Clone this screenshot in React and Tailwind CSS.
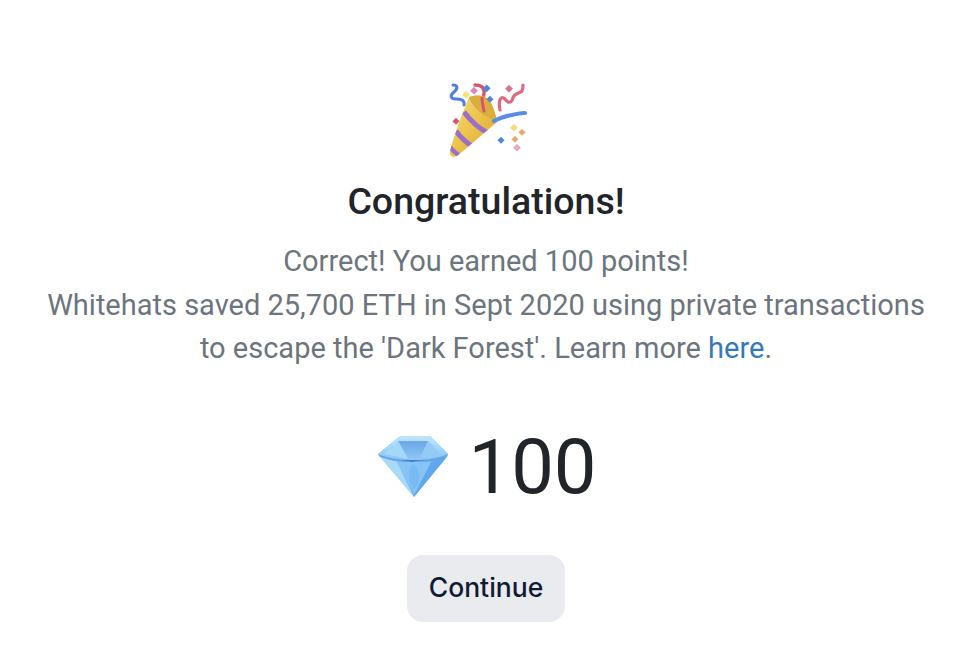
function Popper() {
  const cone = "M38 27 C46 24 56 25 60 33 C63 39 65 46 66 52 C52 64 38 76 26 86 C22 88 18 86 19 81 C24 62 31 44 38 27 Z";
  return (
    <svg width="110" height="100" viewBox="0 0 110 100" className="block blur-[0.4px]">
      <defs>
        <linearGradient id="gold" x1="0" y1="0" x2="1" y2="1">
          <stop offset="0" stopColor="#f6dc80" />
          <stop offset="0.5" stopColor="#ecc24a" />
          <stop offset="1" stopColor="#d6a534" />
        </linearGradient>
        <clipPath id="cone">
          <path d={cone} />
        </clipPath>
      </defs>
      <path d="M22 15 C27 15 27 19 23 22 C18 26 20 29 25 29 C30 29 34 30 33 35" fill="none" stroke="#4f7fe0" strokeWidth="3" strokeLinecap="round" />
      <path d="M44 15 C49 15 54 17 53 23 C52 28 52 34 53 41" fill="none" stroke="#d9546a" strokeWidth="3.4" strokeLinecap="round" />
      <path d="M69 40 C67 30 70 25 74 29 C77 33 80 34 82 28 C83 23 88 24 91 21 C92 19 92 17 92 15" fill="none" stroke="#de6b7d" strokeWidth="3.2" strokeLinecap="round" />
      <path d={cone} fill="url(#gold)" />
      <g clipPath="url(#cone)" fill="none" stroke="#9a6fc8">
        <path d="M33 42 C39 50 47 58 57 63" strokeWidth="5" />
        <path d="M25 61 C30 68 36 73 42 77" strokeWidth="5" />
        <path d="M19 77 C22 81 26 84 30 87" strokeWidth="4.5" />
      </g>
      <path d="M38 27 C46 24 56 25 60 33 C63 39 65 46 66 52 C56 47 47 42 43 36 C40 32 38 29 38 27 Z" fill="#d9ad3e" />
      <path d="M51 28 C51 32 52 36 53 41" fill="none" stroke="#d9546a" strokeWidth="3" strokeLinecap="round" />
      <path d="M63 51 C70 47 75 46 81 45 C85 44 89 43 94 43" fill="none" stroke="#5b8de8" strokeWidth="4.2" strokeLinecap="round" />
      <rect x="32" y="22" width="5.5" height="5.5" fill="#f2e27a" transform="rotate(45 35 25)" />
      <rect x="40" y="18" width="5.5" height="5.5" fill="#d98ab8" transform="rotate(45 43 21)" />
      <rect x="53" y="15" width="5.5" height="5.5" fill="#4f86dc" transform="rotate(45 55 18)" />
      <rect x="56" y="27" width="5" height="5" fill="#4f86dc" transform="rotate(45 59 30)" />
      <rect x="75" y="16" width="5.5" height="5.5" fill="#d9728c" transform="rotate(45 78 19)" />
      <rect x="22" y="49" width="5" height="5" fill="#d9546a" transform="rotate(45 25 52)" />
      <rect x="80" y="55" width="5.5" height="5.5" fill="#efe07c" transform="rotate(45 83 58)" />
      <rect x="88" y="60" width="5" height="5" fill="#e3ac72" transform="rotate(45 91 63)" />
      <rect x="67" y="68" width="5" height="5" fill="#4f86dc" transform="rotate(45 70 71)" />
      <rect x="81" y="67" width="5" height="5" fill="#e3ac72" transform="rotate(45 84 70)" />
      <rect x="83" y="75" width="5.5" height="5.5" fill="#e6a6c4" transform="rotate(45 86 78)" />
    </svg>
  );
}

function Gem() {
  return (
    <svg width="74" height="64" viewBox="0 0 74 64" className="block blur-[0.4px]">
      <defs>
        <linearGradient id="gemTop" x1="0" y1="0" x2="0" y2="1">
          <stop offset="0" stopColor="#bfe6fc" />
          <stop offset="1" stopColor="#86c6f6" />
        </linearGradient>
        <linearGradient id="gemBot" x1="0" y1="0" x2="1" y2="1">
          <stop offset="0" stopColor="#9dd6fa" />
          <stop offset="1" stopColor="#4f9be6" />
        </linearGradient>
        <linearGradient id="gemMid" x1="0" y1="0" x2="0" y2="1">
          <stop offset="0" stopColor="#6aa6e8" />
          <stop offset="1" stopColor="#8fc6f4" />
        </linearGradient>
      </defs>
      <path d="M23 1 H53 L71 19 L37 62 L1 19 Z" fill="url(#gemBot)" />
      <path d="M23 1 H53 L71 19 C54 27 20 27 1 19 Z" fill="url(#gemTop)" />
      <path d="M21 6 H51 L43 24 H31 Z" fill="url(#gemMid)" />
      <path d="M21 6 L31 24 L8 19 Z" fill="#a4d8f9" />
      <path d="M51 6 L43 24 L64 19 Z" fill="#93cbf6" />
      <path d="M1 19 C20 27 54 27 71 19 L70 22 C54 29 20 29 3 22 Z" fill="#6aa5e6" />
      <path d="M24 25 H48 L38 26 L36 27 Z" fill="#3f78c8" />
      <path d="M3 22 L37 62 L20 27 Z" fill="#a9dafa" />
      <path d="M70 22 L37 62 L54 27 Z" fill="#5fa8ec" />
      <path d="M20 27 H54 L37 60 Z" fill="#85c4f5" />
      <path d="M36 29 C44 36 44 46 37 55 C31 46 30 36 36 29 Z" fill="#78bbf3" />
    </svg>
  );
}

export default function App() {
  return (
    <div className="min-h-[658px] bg-white flex flex-col items-center pt-[70px] pr-[2px] font-['Roboto',sans-serif]">
      <Popper />
      <h1 className="mt-[11px] text-[37.5px] leading-[40px] font-medium text-[#212529]">
        Congratulations!
      </h1>
      <div className="mt-[19px] text-center text-[29px] leading-[43.5px] text-[#6c757d] whitespace-nowrap">
        <p>Correct! You earned 100 points!</p>
        <p>Whitehats saved 25,700 ETH in Sept 2020 using private transactions</p>
        <p>
          to escape the 'Dark Forest'. Learn more <a className="text-[#337ab7]">here</a>.
        </p>
      </div>
      <div className="mt-[51px] flex items-center gap-[17px] ml-[2px]">
        <Gem />
        <span className="text-[76px] leading-[90px] text-[#212529]">100</span>
      </div>
      <button className="mt-[43px] w-[158px] h-[67px] rounded-[16px] bg-[#e9ebef] text-[26.5px] font-medium text-[#0f1b33] font-['Inter',sans-serif]">
        Continue
      </button>
    </div>
  );
}
